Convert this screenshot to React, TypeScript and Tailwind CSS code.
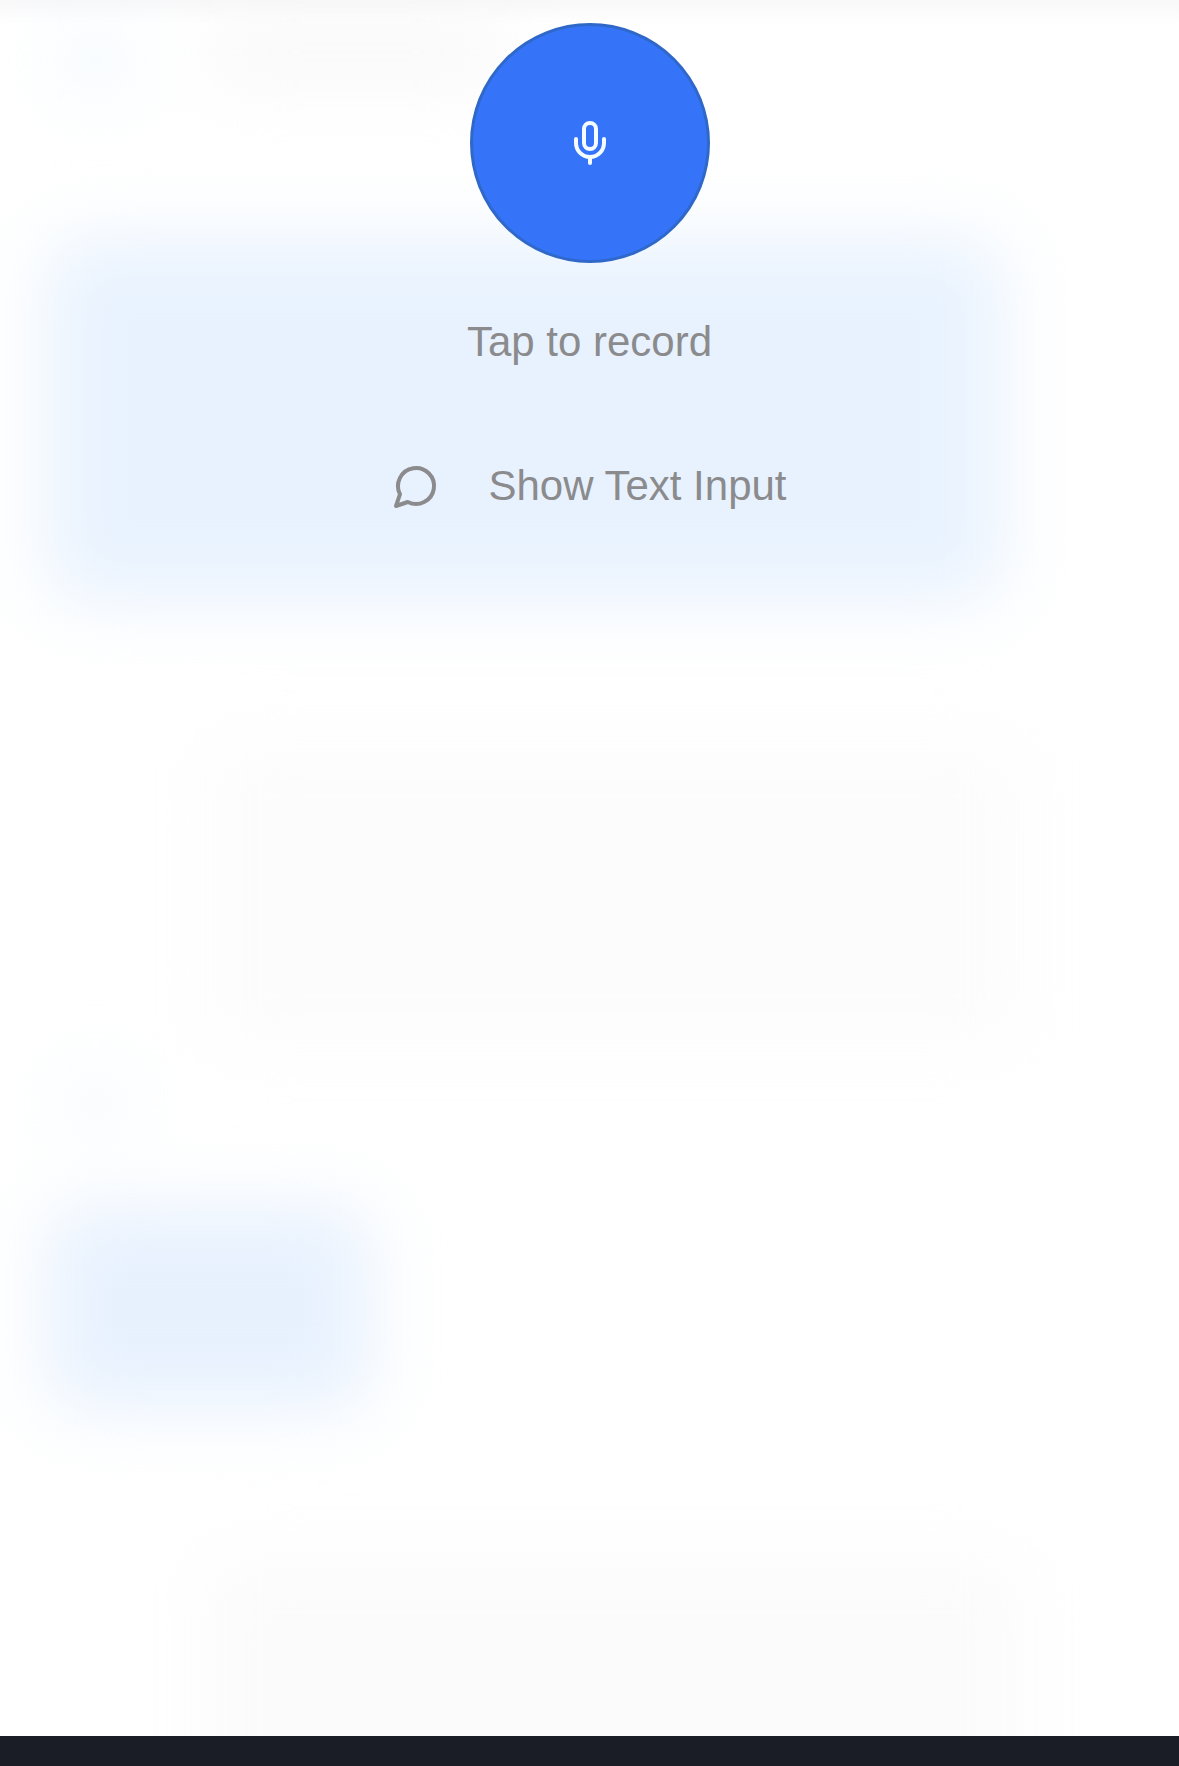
import React from "react";

function MicIcon() {
  return (
    <svg viewBox="0 0 24 24" fill="none" stroke="currentColor" strokeWidth={2} strokeLinecap="round" strokeLinejoin="round" className="size-12" aria-hidden="true">
      <rect x="9" y="2" width="6" height="13" rx="3" />
      <path d="M19 10v2a7 7 0 0 1-14 0v-2" />
      <path d="M12 19v3" />
    </svg>
  );
}

function ChatIcon() {
  return (
    <svg viewBox="0 0 24 24" fill="none" stroke="currentColor" strokeWidth={2} strokeLinecap="round" strokeLinejoin="round" className="size-12 shrink-0" aria-hidden="true">
      <path d="M7.9 20A9 9 0 1 0 4 16.1L2 22Z" />
    </svg>
  );
}

/* The conversation, out of focus behind the recording controls. */
function BlurredConversation() {
  return (
    <div aria-hidden="true" className="col-start-1 row-start-1 flex flex-col overflow-hidden">
      <div className="h-6 shrink-0 bg-linear-to-b from-[#f8f8f9] to-white" />
      <div className="-mb-24 flex flex-1 flex-col px-12 blur-[36px]">
        <div className="flex h-16 gap-20 px-3">
          <div className="size-18 rounded-full bg-[#f1f8ff]" />
          <div className="h-14 w-72 bg-[#f7f7f7]" />
        </div>
        <div className="mt-38 h-90 w-22/25 rounded-3xl bg-[#e8f2fe]" />
        <div className="mt-36 ml-40 h-76 w-3/4 rounded-3xl bg-[#fcfcfc]" />
        <div className="mt-6 ml-4 size-16 rounded-full bg-[#f1f8ff]" />
        <div className="mt-18 h-50 w-80 rounded-3xl bg-[#e7f1fe]" />
        <div className="mt-38 ml-40 w-3/4 flex-1 rounded-t-3xl bg-[#fbfbfb]" />
      </div>
    </div>
  );
}

export default function App() {
  return (
    <div className="flex min-h-screen flex-col bg-white font-['Liberation_Sans',Arial,sans-serif]">
      <main className="grid flex-1 grid-cols-1">
        <BlurredConversation />
        <section className="relative col-start-1 row-start-1 flex flex-col items-center pt-[23px] text-[42px] leading-12 text-[#8b8b8d]">
          <button
            type="button"
            aria-labelledby="record-label"
            className="flex size-60 shrink-0 items-center justify-center rounded-full border-3 border-[#2f68c8] bg-[#3574f8] text-[#f4fcff]"
          >
            <MicIcon />
          </button>
          <p id="record-label" className="mt-[55px]">Tap to record</p>
          <button type="button" className="mt-24 flex items-center gap-12">
            <ChatIcon />
            <span>Show Text Input</span>
          </button>
        </section>
      </main>
      <footer className="h-[30px] bg-[#1a1d25]" />
    </div>
  );
}
